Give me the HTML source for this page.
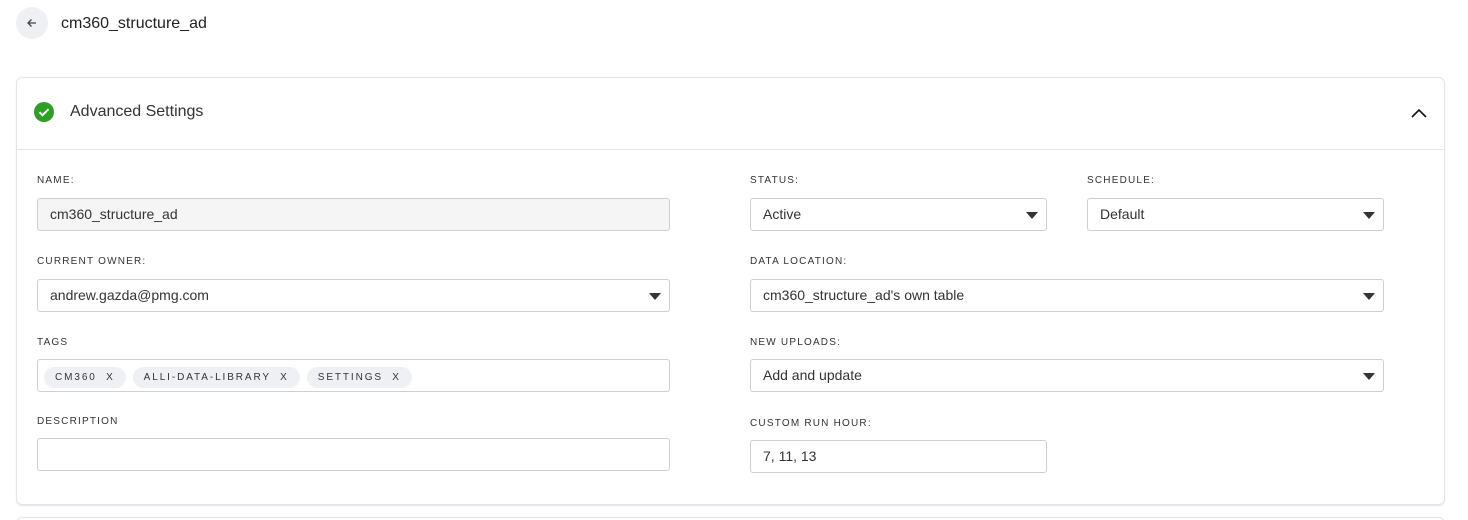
<!DOCTYPE html>
<html style="height:520px;overflow:hidden"><head><style>
*{box-sizing:border-box;margin:0;padding:0}
body{width:1468px;height:520px;background:#fff;font-family:"Liberation Sans",sans-serif;color:#333;position:relative;overflow:hidden}
.abs{position:absolute}
.back{left:16px;top:7px;width:32px;height:32px;border-radius:50%;background:#eef0f4}
.title{left:61px;top:15px;font-size:16px;color:#222}
.card{left:16px;top:77px;width:1429px;height:428px;border:1px solid #e4e4ea;border-radius:6px;box-shadow:0 1px 1px #e4e4ec}
.card2{left:16px;top:517px;width:1429px;height:20px;border:1px solid #e4e4ea;border-radius:6px}
.hdiv{left:17px;top:149px;width:1427px;height:1px;background:#e4e4e4}
.h{left:70px;top:103px;font-size:16px;color:#333}
.lbl{font-size:10px;letter-spacing:1.2px;color:#333}
.in{border:1px solid #cfcfcf;border-radius:3px;height:33px;font-size:14px;color:#333;padding:0 12px;line-height:31px;background:#fff}
.arr{position:absolute;right:8px;top:13px;width:0;height:0;border-left:6px solid transparent;border-right:6px solid transparent;border-top:7px solid #333}
.tag{display:inline-block;background:#eef0f4;border-radius:12px;height:21px;line-height:21px;font-size:10px;letter-spacing:1.9px;padding:0 11px;margin-right:7px;color:#333}
</style></head><body>
<div class="abs back"><svg width="32" height="32"><path d="M20 16H12M15.5 12.5L12 16l3.5 3.5" stroke="#444" stroke-width="1.3" fill="none"/></svg></div>
<div class="abs title">cm360_structure_ad</div>
<div class="abs card"></div>
<div class="abs card2"></div>
<div class="abs hdiv"></div>
<svg class="abs" style="left:33px;top:101px" width="22" height="22"><circle cx="11" cy="11" r="10" fill="#2f9e25"/><path d="M6.5 11.2l3 3 6-6" stroke="#fff" stroke-width="2" fill="none"/></svg>
<div class="abs h">Advanced Settings</div>
<svg class="abs" style="left:1410px;top:107px" width="18" height="12"><path d="M2 10l7-7 7 7" stroke="#111" stroke-width="1.6" fill="none"/></svg>

<div class="abs lbl" style="left:37px;top:175px">NAME:</div>
<div class="abs in" style="left:37px;top:198px;width:633px;background:#f5f5f5">cm360_structure_ad</div>
<div class="abs lbl" style="left:37px;top:256px">CURRENT OWNER:</div>
<div class="abs in" style="left:37px;top:279px;width:633px">andrew.gazda@pmg.com<span class="arr"></span></div>
<div class="abs lbl" style="left:37px;top:337px">TAGS</div>
<div class="abs in" style="left:37px;top:359px;width:633px;padding:0 6px;line-height:31px"><span class="tag">CM360 &nbsp;X</span><span class="tag">ALLI-DATA-LIBRARY &nbsp;X</span><span class="tag">SETTINGS &nbsp;X</span></div>
<div class="abs lbl" style="left:37px;top:416px">DESCRIPTION</div>
<div class="abs in" style="left:37px;top:438px;width:633px"></div>

<div class="abs lbl" style="left:750px;top:175px">STATUS:</div>
<div class="abs in" style="left:750px;top:198px;width:297px">Active<span class="arr"></span></div>
<div class="abs lbl" style="left:1087px;top:175px">SCHEDULE:</div>
<div class="abs in" style="left:1087px;top:198px;width:297px">Default<span class="arr"></span></div>
<div class="abs lbl" style="left:750px;top:256px">DATA LOCATION:</div>
<div class="abs in" style="left:750px;top:279px;width:634px">cm360_structure_ad's own table<span class="arr"></span></div>
<div class="abs lbl" style="left:750px;top:337px">NEW UPLOADS:</div>
<div class="abs in" style="left:750px;top:359px;width:634px">Add and update<span class="arr"></span></div>
<div class="abs lbl" style="left:750px;top:418px">CUSTOM RUN HOUR:</div>
<div class="abs in" style="left:750px;top:440px;width:297px">7, 11, 13</div>
</body></html>
